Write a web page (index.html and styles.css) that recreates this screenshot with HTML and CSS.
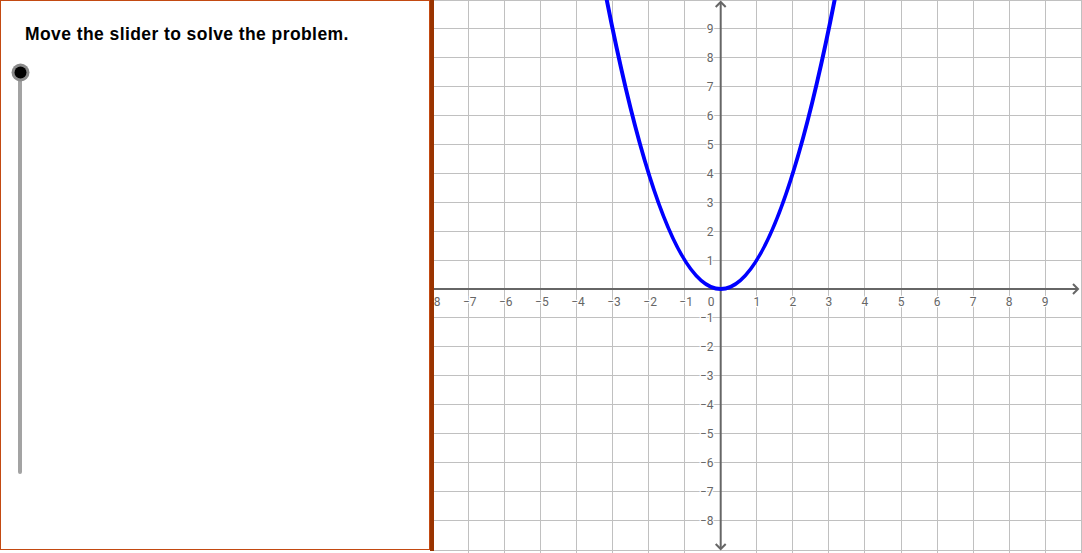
FILE: index.html
```html
<!DOCTYPE html>
<html>
<head>
<meta charset="utf-8">
<link rel="stylesheet" href="styles.css">
</head>
<body>
<div class="app">
  <div class="panel">
    <div class="title">Move the slider to solve the problem.</div>
    <svg class="slider" width="40" height="430" viewBox="0 0 40 430">
      <line class="track" x1="19" y1="13" x2="19" y2="412"/>
      <circle class="halo" cx="19.5" cy="12.5" r="9"/>
      <circle class="knob" cx="19.5" cy="12.5" r="6"/>
    </svg>
  </div>
  <div class="divider"></div>
  <div class="graph">
    <svg width="648" height="553" viewBox="0 0 648 553">
      <g class="grid">
        <line x1="34.28" y1="0" x2="34.28" y2="553"/>
        <line x1="70.34" y1="0" x2="70.34" y2="553"/>
        <line x1="106.4" y1="0" x2="106.4" y2="553"/>
        <line x1="142.46" y1="0" x2="142.46" y2="553"/>
        <line x1="178.52" y1="0" x2="178.52" y2="553"/>
        <line x1="214.58" y1="0" x2="214.58" y2="553"/>
        <line x1="250.64" y1="0" x2="250.64" y2="553"/>
        <line x1="322.76" y1="0" x2="322.76" y2="553"/>
        <line x1="358.82" y1="0" x2="358.82" y2="553"/>
        <line x1="394.88" y1="0" x2="394.88" y2="553"/>
        <line x1="430.94" y1="0" x2="430.94" y2="553"/>
        <line x1="467.0" y1="0" x2="467.0" y2="553"/>
        <line x1="503.06" y1="0" x2="503.06" y2="553"/>
        <line x1="539.12" y1="0" x2="539.12" y2="553"/>
        <line x1="575.18" y1="0" x2="575.18" y2="553"/>
        <line x1="611.24" y1="0" x2="611.24" y2="553"/>
        <line x1="647.3" y1="0" x2="647.3" y2="553"/>

        <line x1="0" y1="0.6" x2="648" y2="0.6"/>
        <line x1="0" y1="28.45" x2="648" y2="28.45"/>
        <line x1="0" y1="57.4" x2="648" y2="57.4"/>
        <line x1="0" y1="86.35" x2="648" y2="86.35"/>
        <line x1="0" y1="115.3" x2="648" y2="115.3"/>
        <line x1="0" y1="144.25" x2="648" y2="144.25"/>
        <line x1="0" y1="173.2" x2="648" y2="173.2"/>
        <line x1="0" y1="202.15" x2="648" y2="202.15"/>
        <line x1="0" y1="231.1" x2="648" y2="231.1"/>
        <line x1="0" y1="260.05" x2="648" y2="260.05"/>
        <line x1="0" y1="317.95" x2="648" y2="317.95"/>
        <line x1="0" y1="346.9" x2="648" y2="346.9"/>
        <line x1="0" y1="375.85" x2="648" y2="375.85"/>
        <line x1="0" y1="404.8" x2="648" y2="404.8"/>
        <line x1="0" y1="433.75" x2="648" y2="433.75"/>
        <line x1="0" y1="462.7" x2="648" y2="462.7"/>
        <line x1="0" y1="491.65" x2="648" y2="491.65"/>
        <line x1="0" y1="520.6" x2="648" y2="520.6"/>
        <line x1="0" y1="550.0" x2="648" y2="550.0"/>
      </g>

      <g class="labels xl">
        <text x="-0.3" y="305.5">−8</text>
        <text x="35.8" y="305.5">−7</text>
        <text x="71.8" y="305.5">−6</text>
        <text x="107.9" y="305.5">−5</text>
        <text x="144" y="305.5">−4</text>
        <text x="180" y="305.5">−3</text>
        <text x="216.1" y="305.5">−2</text>
        <text x="252.1" y="305.5">−1</text>
        <text x="322.76" y="305.5">1</text>
        <text x="358.82" y="305.5">2</text>
        <text x="394.88" y="305.5">3</text>
        <text x="430.94" y="305.5">4</text>
        <text x="467.0" y="305.5">5</text>
        <text x="503.06" y="305.5">6</text>
        <text x="539.12" y="305.5">7</text>
        <text x="575.18" y="305.5">8</text>
        <text x="611.24" y="305.5">9</text>
        <text x="277" y="305.5">0</text>
      </g>

      <g class="labels yl">
        <text x="279.5" y="33">9</text>
        <text x="279.5" y="61.9">8</text>
        <text x="279.5" y="90.8">7</text>
        <text x="279.5" y="119.8">6</text>
        <text x="279.5" y="148.7">5</text>
        <text x="279.5" y="177.7">4</text>
        <text x="279.5" y="206.6">3</text>
        <text x="279.5" y="235.6">2</text>
        <text x="279.5" y="264.5">1</text>
        <text x="279.5" y="322.4">−1</text>
        <text x="279.5" y="351.4">−2</text>
        <text x="279.5" y="380.3">−3</text>
        <text x="279.5" y="409.3">−4</text>
        <text x="279.5" y="438.2">−5</text>
        <text x="279.5" y="467.2">−6</text>
        <text x="279.5" y="496.1">−7</text>
        <text x="279.5" y="525.1">−8</text>
      </g>

      <g class="axes">
        <line x1="0" y1="289" x2="644" y2="289"/>
        <polyline points="639,284 644,289 639,294"/>
        <line x1="286.7" y1="2" x2="286.7" y2="549"/>
        <polyline points="281.7,7 286.7,2 291.7,7"/>
        <polyline points="281.7,544 286.7,549 291.7,544"/>
      </g>

      <path class="curve" d="M 171.31 -7.45 Q 286.7 585.45 402.09 -7.45"/>
    </svg>
  </div>
</div>
</body>
</html>
```

FILE: styles.css
```css
html, body {
  margin: 0;
  padding: 0;
  background: #ffffff;
}

.app {
  display: flex;
  width: 1082px;
  height: 553px;
  overflow: hidden;
}

.panel {
  box-sizing: border-box;
  width: 430px;
  height: 550px;
  border: 1px solid #c34a12;
  display: flex;
  flex-direction: column;
  flex-shrink: 0;
}

.title {
  padding: 23px 0 0 24px;
  font-family: "Liberation Sans", Arial, sans-serif;
  font-weight: bold;
  font-size: 17.5px;
  line-height: 20px;
  color: #000000;
  letter-spacing: 0.42px;
}

.slider {
  display: block;
  margin-top: 16px;
}

.track {
  stroke: #a3a3a3;
  stroke-width: 4;
  stroke-linecap: round;
}

.halo {
  fill: #8a8a8a;
}

.knob {
  fill: #000000;
}

.divider {
  width: 4px;
  height: 551px;
  background: #993300;
  flex-shrink: 0;
}

.graph {
  flex: 1;
  height: 553px;
}

.graph svg {
  display: block;
}

.grid line {
  stroke: #c0c0c0;
  stroke-width: 1;
  shape-rendering: crispEdges;
}

.labels text {
  font-family: Roboto, "Liberation Sans", sans-serif;
  font-size: 12px;
  fill: #666666;
  stroke: #ffffff;
  stroke-width: 2.5px;
  paint-order: stroke;
}

.xl text {
  text-anchor: middle;
}

.yl text {
  text-anchor: end;
}

.axes line,
.axes polyline {
  stroke: #666666;
  stroke-width: 2;
  fill: none;
}

.curve {
  fill: none;
  stroke: #0000ff;
  stroke-width: 4;
}
```
